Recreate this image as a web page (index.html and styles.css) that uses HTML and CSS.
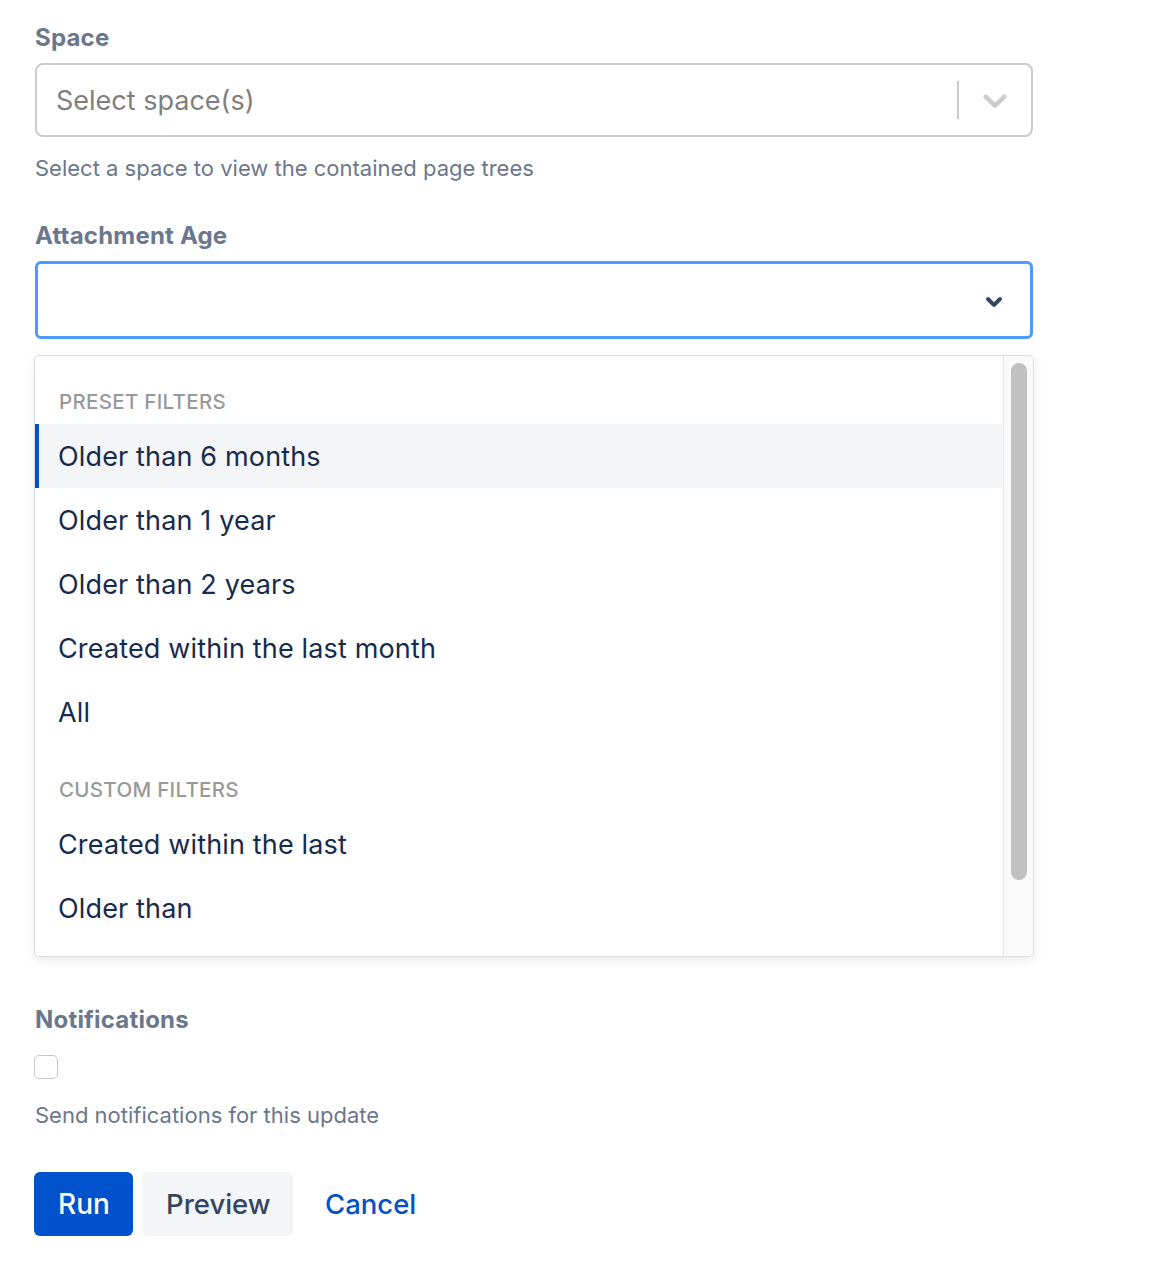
FILE: index.html
```html
<!DOCTYPE html>
<html lang="en">
<head>
<meta charset="utf-8">
<title>Attachment filter</title>
<link rel="stylesheet" href="styles.css">
</head>
<body>
<form class="form">
  <div class="field">
    <label class="label">Space</label>
    <div class="select">
      <div class="value"><span class="placeholder">Select space(s)</span></div>
      <span class="sep"></span>
      <span class="indicator">
        <svg width="40" height="40" viewBox="0 0 20 20"><path fill="#cccccc" d="M4.516 7.548c0.436-0.446 1.043-0.481 1.576 0l3.908 3.747 3.908-3.747c0.533-0.481 1.141-0.446 1.574 0 0.436 0.445 0.408 1.197 0 1.615-0.406 0.418-4.695 4.502-4.695 4.502-0.217 0.223-0.502 0.335-0.787 0.335s-0.57-0.112-0.789-0.335c0 0-4.287-4.084-4.695-4.502s-0.436-1.170 0-1.615z"/></svg>
      </span>
    </div>
    <p class="helper helper-space">Select a space to view the contained page trees</p>
  </div>

  <div class="field field-age">
    <label class="label">Attachment Age</label>
    <div class="select select-focus">
      <div class="value"></div>
      <span class="indicator-dark">
        <svg width="48" height="48" viewBox="0 0 24 24"><path fill="#344563" d="M8.292 10.293a1.009 1.009 0 0 0 0 1.419l2.939 2.965c.218.215.5.322.779.322s.556-.107.769-.322l2.93-2.955a1.01 1.01 0 0 0 0-1.419.987.987 0 0 0-1.406 0l-2.298 2.317-2.307-2.327a.99.99 0 0 0-1.406 0z"/></svg>
      </span>
    </div>
    <div class="menu">
      <div class="menu-list">
        <div class="group-heading">Preset filters</div>
        <div class="option option-active">Older than 6 months</div>
        <div class="option">Older than 1 year</div>
        <div class="option">Older than 2 years</div>
        <div class="option">Created within the last month</div>
        <div class="option">All</div>
        <div class="group-heading">Custom filters</div>
        <div class="option">Created within the last</div>
        <div class="option">Older than</div>
      </div>
      <div class="scrollbar"><div class="thumb"></div></div>
    </div>
  </div>

  <div class="field field-notify">
    <label class="label">Notifications</label>
    <span class="checkbox"></span>
    <p class="helper helper-notify">Send notifications for this update</p>
  </div>

  <div class="actions">
    <button type="button" class="btn btn-primary">Run</button>
    <button type="button" class="btn btn-secondary">Preview</button>
    <button type="button" class="btn btn-link">Cancel</button>
  </div>
</form>
</body>
</html>
```

FILE: styles.css
```css
* { box-sizing: border-box; }

html, body {
  margin: 0;
  padding: 0;
  background: #ffffff;
}

body {
  font-family: Inter, "Liberation Sans", Arial, sans-serif;
  color: #172b4d;
}

.form {
  width: 1033px;
  padding: 24px 0 0 35px;
}

.field {
  display: flex;
  flex-direction: column;
}

.label {
  font-size: 24px;
  line-height: 28px;
  font-weight: 700;
  color: #6b778c;
  margin-bottom: 11px;
  letter-spacing: 0.2px;
}

.select {
  display: flex;
  align-items: center;
  height: 74px;
  border: 2px solid #cccccc;
  border-radius: 8px;
  background: #fff;
}

.value {
  flex: 1;
  padding: 0 16px 0 19px;
}

.placeholder {
  font-size: 27px;
  color: #7f7f7f;
}

.sep {
  width: 2px;
  align-self: stretch;
  margin: 16px 0;
  background: #cccccc;
}

.indicator {
  width: 72px;
  height: 72px;
  padding: 16px;
  display: flex;
  align-items: center;
  justify-content: center;
}

.indicator svg { display: block; }

.select-focus {
  height: 78px;
  border: 3px solid #4c9aff;
  border-radius: 6px;
}

.indicator-dark {
  width: 48px;
  height: 48px;
  margin-right: 12px;
  margin-top: 2px;
}

.indicator-dark svg { display: block; }

.helper {
  margin: 0;
  font-size: 22px;
  line-height: 24px;
  color: #6b778c;
}

.helper-space { margin-top: 19px; }

.field-age { margin-top: 42px; }

.menu {
  margin-top: 16px;
  margin-left: -1px;
  width: 1000px;
  height: 602px;
  display: flex;
  border: 1px solid #dddddd;
  border-radius: 5px;
  background: #fff;
  box-shadow: 0 4px 12px rgba(0, 0, 0, 0.08);
  overflow: hidden;
}

.menu-list {
  flex: 1;
  padding-bottom: 17px;
}

.group-heading {
  padding: 34px 24px 10px;
  font-size: 20.5px;
  line-height: 24px;
  font-weight: 500;
  text-transform: uppercase;
  letter-spacing: 0.3px;
  color: #999999;
}

.option {
  height: 64px;
  display: flex;
  align-items: center;
  padding: 0 24px 0 23px;
  font-size: 27px;
  letter-spacing: 0.15px;
  color: #172b4d;
}

.option-active {
  background: #f4f5f7;
  border-left: 4px solid #0052cc;
  padding-left: 19px;
}

.scrollbar {
  width: 30px;
  border-left: 1px solid #e8e8e8;
  background: #fafafa;
  padding: 7px 6px 0 7px;
}

.thumb {
  height: 517px;
  border-radius: 8px;
  background: #c1c1c1;
}

.field-notify { margin-top: 49px; }

.field-notify .label { margin-bottom: 21px; }

.checkbox {
  display: block;
  width: 24px;
  height: 24px;
  margin-left: -1px;
  border: 1.5px solid #c8c8c8;
  border-radius: 5px;
  background: #fff;
}

.helper-notify { margin-top: 24px; }

.actions {
  display: flex;
  gap: 9px;
  margin-top: 45px;
  margin-left: -1px;
}

.btn {
  height: 64px;
  padding: 0 24px;
  border: none;
  border-radius: 6px;
  font-family: inherit;
  font-size: 28px;
  font-weight: 500;
  cursor: pointer;
}

.btn-primary {
  background: #0052cc;
  color: #ffffff;
  width: 99px;
}

.btn-secondary {
  background: #f4f5f7;
  color: #344563;
  width: 151px;
  font-size: 27.5px;
}

.btn-link {
  background: transparent;
  color: #0052cc;
  padding-left: 23px;
  font-size: 27.5px;
}
```
